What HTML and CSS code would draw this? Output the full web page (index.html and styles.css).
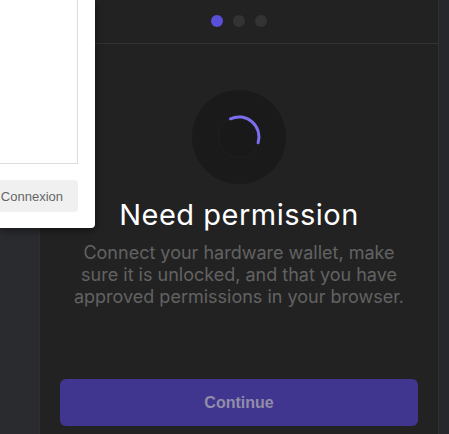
FILE: index.html
```html
<!DOCTYPE html>
<html lang="en">
<head>
    <meta charset="UTF-8">
    <meta name="viewport" content="width=device-width, initial-scale=1.0">
    <title>Need permission</title>
    <link rel="stylesheet" href="styles.css">
</head>
<body>
    <div class="layout">
        <div class="side"></div>

        <!-- wallet panel -->
        <div class="panel">
            <div class="steps">
                <span class="dot active"></span>
                <span class="dot"></span>
                <span class="dot"></span>
            </div>

            <div class="content">
                <div class="spinner">
                    <div class="ring"></div>
                    <svg class="arc" width="46" height="46" viewBox="0 0 46 46">
                        <path d="M14.5 4.8 A20 20 0 0 1 42.1 28.8" fill="none" stroke="#7b6ff0" stroke-width="3" stroke-linecap="round"/>
                    </svg>
                </div>
                <h1>Need permission</h1>
                <p>Connect your hardware wallet, make sure it is unlocked, and that you have approved permissions in your browser.</p>
            </div>

            <button class="continue">Continue</button>
        </div>

        <div class="edge"></div>
    </div>

    <!-- browser popup behind -->
    <div class="popup">
        <div class="field"></div>
        <button class="login">Connexion</button>
    </div>
</body>
</html>
```

FILE: styles.css
```css
/* dark wallet modal */
* {
    box-sizing: border-box;
}
body {
    margin: 0;
    background: #28292c;
    font-family: Inter, 'Noto Sans', sans-serif;
    overflow: hidden;
}
.layout {
    display: flex;
    height: 434px;
}
.side {
    width: 39px;
    background: #2a2b2f;
}
.panel {
    width: 400px;
    background: #222222;
    border-left: 1px solid #2f2f2f;
    border-right: 1px solid #2f2f2f;
    display: flex;
    flex-direction: column;
}
.edge {
    flex: 1;
    background: #27282b;
}
.steps {
    height: 44px;
    border-bottom: 1px solid #333333;
    display: flex;
    justify-content: center;
    align-items: center;
    gap: 10px;
    padding-bottom: 1px;
}
.dot {
    width: 12px;
    height: 12px;
    border-radius: 50%;
    background: #333333;
}
.dot.active {
    background: #5a4fd8;
}
.content {
    display: flex;
    flex-direction: column;
    align-items: center;
    padding-top: 46px;
}
.spinner {
    position: relative;
    width: 94px;
    height: 94px;
    border-radius: 50%;
    background: #1a1a1a;
    display: flex;
    justify-content: center;
    align-items: center;
}
.ring {
    width: 42px;
    height: 42px;
    border-radius: 50%;
    border: 1px solid #202020;
    background: #191919;
}
.arc {
    position: absolute;
    left: 24px;
    top: 24px;
}
h1 {
    margin: 14px 0 0;
    color: #ffffff;
    font-size: 29px;
    font-weight: 400;
    letter-spacing: 0.5px;
    line-height: 34px;
}
p {
    margin: 10px 0 0;
    width: 345px;
    text-align: center;
    color: #626262;
    font-size: 18px;
    line-height: 22px;
}
.continue {
    margin: auto 20px 8px;
    height: 47px;
    border: none;
    border-radius: 6px;
    background: #41368f;
    color: #918da9;
    font-family: 'Liberation Sans', Arial, sans-serif;
    font-weight: 700;
    font-size: 16px;
}
.popup {
    position: absolute;
    left: 0;
    top: 0;
    width: 95px;
    height: 228px;
    background: #ffffff;
    border-radius: 0 0 4px 0;
    box-shadow: 0 2px 8px rgba(0,0,0,0.5);
    padding: 0 17px 0 0;
}
.field {
    height: 164px;
    margin-left: -10px;
    border: 1px solid #dddddd;
    border-top: none;
}
.login {
    display: block;
    margin: 16px 0 0 -10px;
    width: 88px;
    height: 32px;
    border: none;
    border-radius: 4px;
    background: #f0f0f0;
    color: #666666;
    font-family: 'Liberation Sans', Arial, sans-serif;
    font-size: 13px;
    text-align: right;
    padding: 0 15px 0 0;
}
```
